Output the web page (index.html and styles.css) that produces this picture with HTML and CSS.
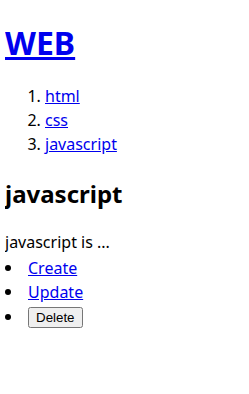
FILE: index.html
```html
<!DOCTYPE html>
<html lang="en">
<head>
<meta charset="UTF-8">
<title>WEB</title>
<link rel="stylesheet" href="styles.css">
</head>
<body>

<h1><a href="#">WEB</a></h1>

<ol class="nav">
  <li><a href="#">html</a></li>
  <li><a href="#">css</a></li>
  <li><a href="#">javascript</a></li>
</ol>

<h2>javascript</h2>
<p class="desc">javascript is ...</p>

<ul class="control">
  <li><a href="#">Create</a></li>
  <li><a href="#">Update</a></li>
  <li><button type="button">Delete</button></li>
</ul>

</body>
</html>
```

FILE: styles.css
```css
body {
  margin: 0 5px;
  font-family: "Noto Sans", sans-serif;
  font-size: 16px;
  line-height: 1.5;
  color: black;
}

a {
  color: #0000ee;
}

h1 {
  font-size: 32px;
  line-height: 1.5;
  margin: 19px 0 17px;
}

.nav {
  margin: 0;
  padding-left: 40px;
}

h2 {
  font-size: 24px;
  line-height: 1.5;
  margin: 20px 0 18px;
}

.desc {
  margin: 0;
}

.control {
  list-style: none;
  margin: 2px 0 0;
  padding: 0;
}

.control li {
  display: flex;
  align-items: center;
  height: 24px;
}

.control li:last-child {
  margin-top: 1px;
}

/* 黒丸 */
.control li::before {
  content: "";
  width: 6px;
  height: 6px;
  border-radius: 50%;
  background: black;
  margin-right: 17px;
}

.control button {
  font-family: Arial, "Liberation Sans", sans-serif;
  font-size: 13.333px;
}
```
